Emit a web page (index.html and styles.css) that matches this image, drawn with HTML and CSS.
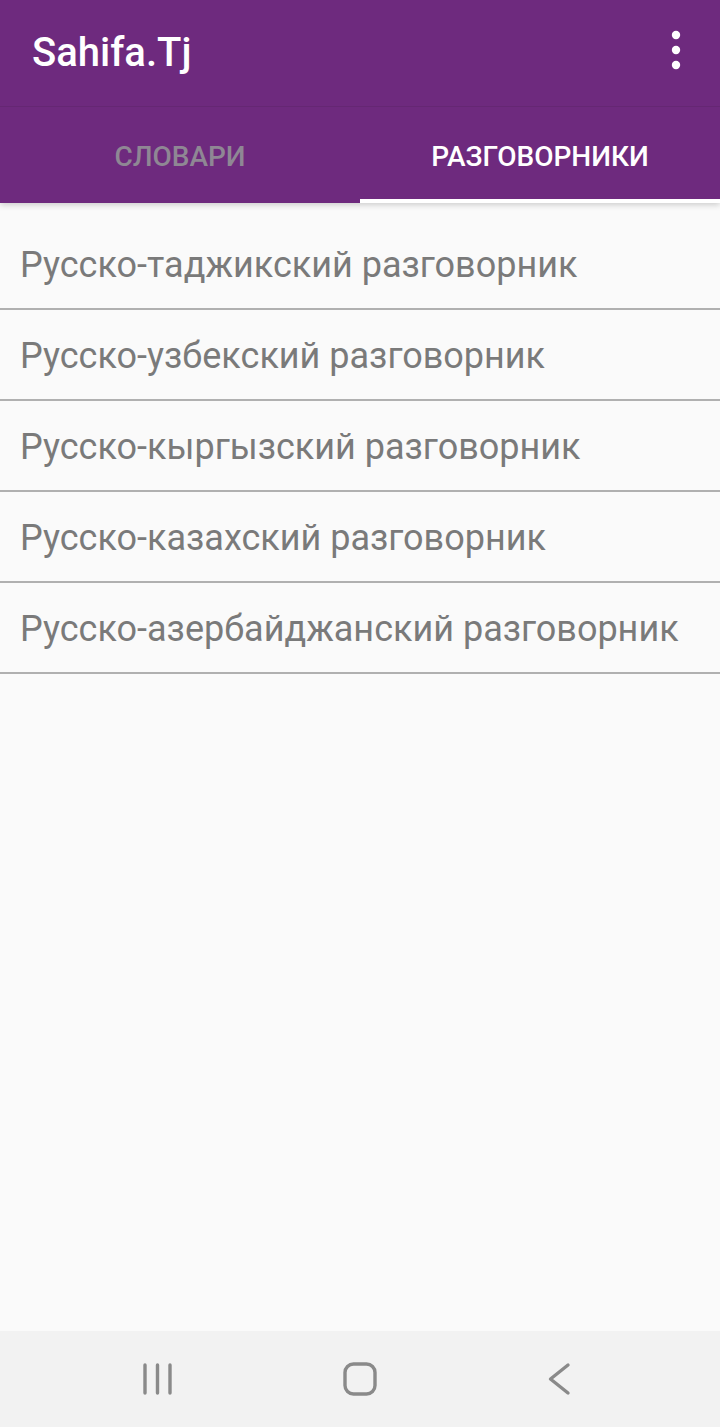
FILE: index.html
```html
<!DOCTYPE html>
<html lang="ru">
<head>
<meta charset="utf-8">
<link rel="stylesheet" href="styles.css">
</head>
<body>
<div class="screen">
  <header class="appbar">
    <div class="toolbar">
      <h1 class="title">Sahifa.Tj</h1>
      <div class="menu">
        <svg width="12" height="40" viewBox="0 0 12 40"><circle cx="6" cy="5" r="4.2" fill="#fff"/><circle cx="6" cy="20" r="4.2" fill="#fff"/><circle cx="6" cy="35" r="4.2" fill="#fff"/></svg>
      </div>
    </div>
    <nav class="tabs">
      <div class="tab">СЛОВАРИ</div>
      <div class="tab active">РАЗГОВОРНИКИ</div>
    </nav>
  </header>
  <main class="list">
    <div class="item">Русско-таджикский разговорник</div>
    <div class="item">Русско-узбекский разговорник</div>
    <div class="item">Русско-кыргызский разговорник</div>
    <div class="item">Русско-казахский разговорник</div>
    <div class="item">Русско-азербайджанский разговорник</div>
  </main>
  <footer class="navbar">
    <svg class="nav-icon" width="34" height="34" viewBox="0 0 34 34"><path d="M3 3v28M15.5 3v28M28 3v28" stroke="#8a8a8a" stroke-width="3.4" stroke-linecap="round" fill="none"/></svg>
    <svg class="nav-icon" width="34" height="34" viewBox="0 0 34 34"><rect x="2" y="2" width="30" height="30" rx="8.5" stroke="#8a8a8a" stroke-width="3.4" fill="none"/></svg>
    <svg class="nav-icon" width="34" height="34" viewBox="0 0 34 34"><path d="M24 3 L6.5 17 L24 31" stroke="#8a8a8a" stroke-width="3.4" stroke-linecap="round" stroke-linejoin="round" fill="none"/></svg>
  </footer>
</div>
</body>
</html>
```

FILE: styles.css
```css
* { box-sizing: border-box; }
html, body { margin: 0; padding: 0; }
body { font-family: Roboto, "Liberation Sans", sans-serif; background: #fafafa; }
.screen { width: 720px; height: 1427px; display: flex; flex-direction: column; background: #fafafa; }
.appbar { background: #6e2a7e; position: relative; z-index: 1; box-shadow: 0 2px 6px rgba(0,0,0,0.18); }
.toolbar { height: 107px; display: flex; align-items: center; justify-content: space-between; padding: 0 38px 0 32px; border-bottom: 1px solid #652773; }
.title { margin: 0; color: #fff; font-size: 40px; font-weight: 500; letter-spacing: 0; padding-bottom: 2px; }
.menu { display: flex; align-items: center; padding-bottom: 6px; }
.tabs { display: flex; height: 96px; }
.tab { flex: 1; display: flex; align-items: center; justify-content: center; font-size: 28px; font-weight: 500; color: #8f8794; border-bottom: 4px solid transparent; padding-top: 6px; }
.tab.active { color: #fff; border-bottom-color: #fff; }
.list { flex: 1; padding-top: 16px; }
.item { height: 91px; display: flex; align-items: center; padding: 3px 20px 0; font-size: 36px; color: #7a7a7a; border-bottom: 2px solid #b0b0b0; }
.navbar { height: 96px; background: #f2f2f2; display: flex; align-items: center; justify-content: space-between; padding: 0 142px 0 142px; }
.nav-icon { display: block; }
```
